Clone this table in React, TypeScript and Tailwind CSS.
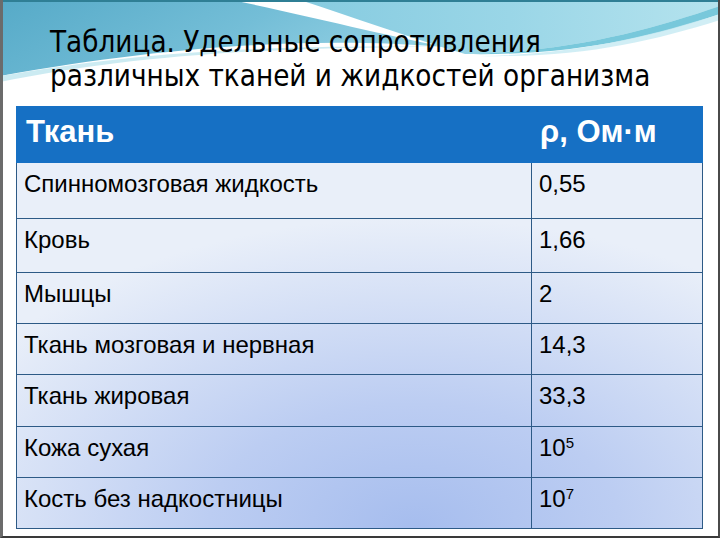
import React from "react";

const sup = (n: string) => (
  <span>
    10<sup className="text-[15px] relative -top-[8px] align-baseline">{n}</sup>
  </span>
);

const rows: { name: string; val: React.ReactNode; h: string }[] = [
  { name: "Спинномозговая жидкость", val: "0,55", h: "h-[55px]" },
  { name: "Кровь", val: "1,66", h: "h-[54px]" },
  { name: "Мышцы", val: "2", h: "h-[51px]" },
  { name: "Ткань мозговая и нервная", val: "14,3", h: "h-[51px]" },
  { name: "Ткань жировая", val: "33,3", h: "h-[52px]" },
  { name: "Кожа сухая", val: sup("5"), h: "h-[51px]" },
  { name: "Кость без надкостницы", val: sup("7"), h: "h-[51px]" },
];

function Wave() {
  return (
    <svg
      className="absolute left-0 top-0"
      width="720"
      height="110"
      viewBox="0 0 720 110"
    >
      <defs>
        <linearGradient id="ga" x1="0" y1="0" x2="1" y2="0.3">
          <stop offset="0" stopColor="#56aac8" />
          <stop offset="0.6" stopColor="#74bed7" />
          <stop offset="1" stopColor="#92d0e3" />
        </linearGradient>
        <linearGradient id="gb" x1="0" y1="0" x2="1" y2="0">
          <stop offset="0" stopColor="#86cbe0" />
          <stop offset="0.5" stopColor="#9ad6e7" />
          <stop offset="1" stopColor="#b5e3ee" />
        </linearGradient>
      </defs>
      <path
        d="M0,0 L232,0 C300,14 380,34 445,47 C330,38 190,42 0,76 Z"
        fill="url(#ga)"
      />
      <path
        d="M0,76 C120,56 230,44 445,47 C230,47 110,60 0,82 Z"
        fill="#bfe6ef"
        opacity="0.8"
      />
      <path
        d="M300,0 L720,0 L720,6 C650,30 570,52 465,54 C410,38 350,16 300,0 Z"
        fill="url(#gb)"
      />
      <path
        d="M465,54 C570,52 650,30 720,6 L720,14 C650,38 570,56 465,54 Z"
        fill="#3fb1cc"
        opacity="0.7"
      />
      <path
        d="M480,56 C580,54 650,36 720,14 L720,20 C650,42 580,58 480,56 Z"
        fill="#c6eaf2"
        opacity="0.8"
      />
      <rect x="0" y="0" width="720" height="2" fill="#2f7f95" />
    </svg>
  );
}

export default function App() {
  return (
    <div className="relative w-[720px] h-[540px] bg-white overflow-hidden">
      <Wave />
      <div className="absolute inset-0 border-l-[3px] border-l-[#6b6b6b] border-r-[2px] border-r-[#4a4a4a] border-b-[2px] border-b-[#3a3a3a] pointer-events-none h-[538px]" />
      <div className="relative flex flex-col">
        <div
          className="pt-[25px] pl-[50px] text-[29.3px] leading-[34px] text-black h-[106px]"
          style={{ fontFamily: '"DejaVu Sans Condensed", "DejaVu Sans", sans-serif' }}
        >
          <div>Таблица. Удельные сопротивления</div>
          <div>различных тканей и жидкостей организма</div>
        </div>
        <div
          className="ml-[16px] w-[687px] flex flex-col"
          style={{ fontFamily: '"Liberation Sans", Arial, sans-serif' }}
        >
          <div className="flex h-[57px] bg-[#1670c4] text-white font-bold text-[31px] leading-[36px]">
            <div className="w-[516px] pl-[10px] pt-[8px]">Ткань</div>
            <div className="flex-1 pl-[8px] pt-[8px]">ρ, Ом·м</div>
          </div>
          <div className="flex flex-col border-l-[1.5px] border-r-[1.5px] border-b-[1.5px] border-[#2d5a86] bg-[radial-gradient(ellipse_75%_85%_at_58%_100%,#a6bdee_0%,#bccdf2_40%,#e9eff9_100%)]">
            {rows.map((r, i) => (
              <div
                key={i}
                className={`flex ${r.h} ${i > 0 ? "border-t-[1.5px] border-[#2d5a86]" : ""} text-[24px] text-black`}
              >
                <div className="w-[515px] border-r-[1.5px] border-[#2d5a86] pl-[7px] pt-[7px] leading-[28px]">
                  {r.name}
                </div>
                <div className="flex-1 pl-[7px] pt-[7px] leading-[28px]">{r.val}</div>
              </div>
            ))}
          </div>
        </div>
      </div>
    </div>
  );
}
